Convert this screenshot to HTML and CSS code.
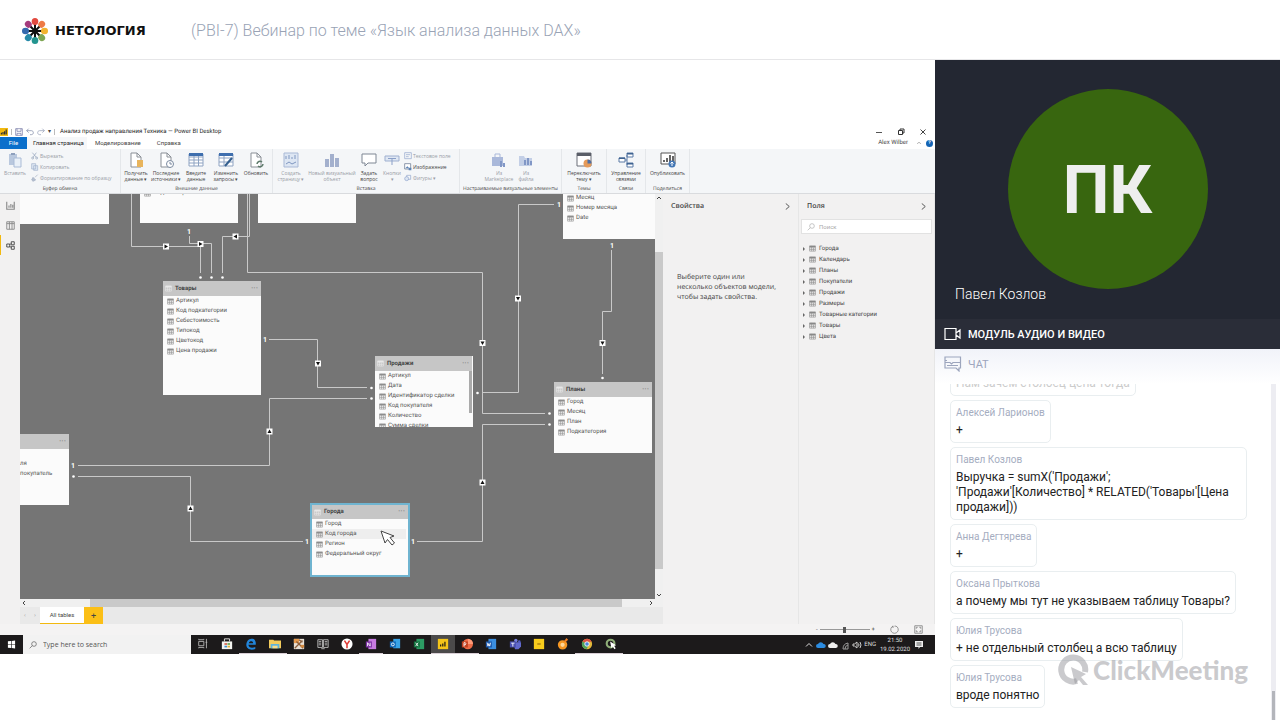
FILE: index.html
```html
<!DOCTYPE html>
<html lang="ru">
<head>
    <meta charset="UTF-8">
    <meta name="viewport" content="width=device-width, initial-scale=1.0">
    <title>Вебинар по теме «Язык анализа данных DAX»</title>
    <link rel="stylesheet" href="styles.css">
</head>
<body>
    <!-- shared icons -->
    <svg class="sprite" aria-hidden="true">
        <symbol id="i-table" viewBox="0 0 12 12"><path d="M1 1.5h10v9H1zM1 4.500h10M4.500 1.500v9M7.800 4.500v6M1 7.500h10" fill="none" stroke="currentColor"/><path d="M1 1.500h10v2H1z" fill="currentColor"/></symbol>
        <symbol id="i-doc" viewBox="0 0 16 16"><path d="M3 1h6l4 4v10H3z" fill="#fff" stroke="#8a8f96"/><path d="M9 1v4h4" fill="none" stroke="#8a8f96"/></symbol>
        <symbol id="i-search" viewBox="0 0 12 12"><circle cx="7.500" cy="4.500" r="3.500" fill="none" stroke="currentColor"/><path d="M5 7L1 11" stroke="currentColor"/></symbol>
        <symbol id="i-chevron" viewBox="0 0 8 8"><path d="M2 0.500L6 4 2 7.500" fill="none" stroke="currentColor"/></symbol>
    </svg>

    <header class="topbar">
        <a class="brand" href="#">
            <svg class="brand-mark" viewBox="0 0 28 28">
                <g stroke="#111" stroke-width="2"><path d="M14 6v16M6 14h16M8 8l12 12M20 8L8 20"/></g>
                <circle cx="14" cy="14" r="2.500" fill="#111"/>
                <ellipse cx="14" cy="4.500" rx="3.300" ry="3.500" fill="#e2493f"/>
                <ellipse cx="14" cy="4.500" rx="3.300" ry="3.500" fill="#ee7a45" transform="rotate(45 14 14)"/>
                <ellipse cx="14" cy="4.500" rx="3.300" ry="3.500" fill="#f2b32f" transform="rotate(90 14 14)"/>
                <ellipse cx="14" cy="4.500" rx="3.300" ry="3.500" fill="#7ea653" transform="rotate(135 14 14)"/>
                <ellipse cx="14" cy="4.500" rx="3.300" ry="3.500" fill="#23948f" transform="rotate(180 14 14)"/>
                <ellipse cx="14" cy="4.500" rx="3.300" ry="3.500" fill="#2689a8" transform="rotate(225 14 14)"/>
                <ellipse cx="14" cy="4.500" rx="3.300" ry="3.500" fill="#3569ad" transform="rotate(270 14 14)"/>
                <ellipse cx="14" cy="4.500" rx="3.300" ry="3.500" fill="#a43a7c" transform="rotate(315 14 14)"/>
            </svg>
            <span>НЕТОЛОГИЯ</span>
        </a>
        <h1>(PBI-7) Вебинар по теме «Язык анализа данных DAX»</h1>
    </header>

    <div class="room">
        <main class="stage">
            <div class="screen">
                <div class="titlebar">
                    <svg class="pbi" viewBox="0 0 10 10"><path d="M0 0h10v10H0z" fill="#f2b90f"/><path d="M1 8V6h1.500v2zM3 8V5h1.500v3zM5 8V4h1.500v4zM7 8V2h1.500v6z" fill="#333"/></svg>
                    <i class="tick"></i>
                    <svg class="ic8" viewBox="0 0 12 12"><path d="M1 1h10v10H1zM3 1v4h6V1M3 11V8h6v3" fill="none" stroke="#6c6fa0"/></svg>
                    <svg class="ic8" viewBox="0 0 12 12"><path d="M4 1L1 4l3 3M1 4h7c4 0 4 6 0 6H6" fill="none" stroke="#7481a0"/></svg>
                    <svg class="ic8" viewBox="0 0 12 12"><path d="M8 1l3 3-3 3M11 4H4c-4 0-4 6 0 6h2" fill="none" stroke="#8b96b0"/></svg>
                    <span class="drop">▾</span>
                    <i class="tick"></i>
                    <span class="doc-title">Анализ продаж направления Техника — Power BI Desktop</span>
                    <div class="window-buttons">
                        <button aria-label="Свернуть"><svg viewBox="0 0 8 8"><path d="M1 4.500h6" stroke="#555"/></svg></button>
                        <button aria-label="Развернуть"><svg viewBox="0 0 8 8"><path d="M1.500 2.500h4v4h-4zM3 2.500V1h4v4H5.500" fill="none" stroke="#333"/></svg></button>
                        <button aria-label="Закрыть"><svg viewBox="0 0 8 8"><path d="M1.500 1.500l5 5M6.500 1.500l-5 5" stroke="#444"/></svg></button>
                    </div>
                </div>

                <nav class="ribbon-tabs">
                    <button class="file">File</button>
                    <button class="active">Главная страница</button>
                    <button>Моделирование</button>
                    <button>Справка</button>
                    <div class="account">
                        <span>Alex Wilber</span>
                        <svg class="ic6" viewBox="0 0 8 8"><path d="M1.500 5L4 3l2.500 2" fill="none" stroke="#999"/></svg>
                        <b class="help">?</b>
                    </div>
                </nav>

                <div class="ribbon">
                    <section class="group clipboard">
                        <div class="tools">
                            <button class="tool slot-m dim">
                                <svg viewBox="0 0 16 16"><path d="M2 2h8v11H2z" fill="#b9c8de"/><path d="M4 1h4v2H4z" fill="#8ea0bd"/><path d="M7 6h7v9H7z" fill="#e9f0f8" stroke="#a9bbd6"/></svg>
                                Вставить</button>
                            <div class="stack dim">
                                <button><svg viewBox="0 0 12 12"><path d="M2 1l6 7M8 1L3 8" stroke="#8fa0b8"/><circle cx="2.500" cy="9" r="1.500" fill="none" stroke="#8fa0b8"/><circle cx="8.500" cy="9" r="1.500" fill="none" stroke="#8fa0b8"/></svg>Вырезать</button>
                                <button><svg viewBox="0 0 12 12"><path d="M1 1h6v8H1zM4 4h6v7H4z" fill="#dfe8f4" stroke="#9fb0ca"/></svg>Копировать</button>
                                <button><svg viewBox="0 0 12 12"><path d="M10 1L6 5M3 5l4 4-4 2-2-2z" fill="#b4bfd0" stroke="#9fabc0"/></svg>Форматирование по образцу</button>
                            </div>
                        </div>
                        <h4>Буфер обмена</h4>
                    </section>
                    <section class="group external">
                        <div class="tools">
                            <button class="tool slot-m"><svg viewBox="0 0 16 16"><use href="#i-doc"/><path d="M9 8h6v7H9z" fill="#e8b45c"/></svg>Получить<br>данные ▾</button>
                            <button class="tool slot-m"><svg viewBox="0 0 16 16"><use href="#i-doc"/><circle cx="12" cy="12" r="3.500" fill="#fff" stroke="#7b8aa0"/><path d="M12 10v2h2" fill="none" stroke="#7b8aa0"/></svg>Последние<br>источники ▾</button>
                            <button class="tool slot-m"><svg viewBox="0 0 16 16"><path d="M1 2h14v12H1zM1 5h14M1 8h14M1 11h14M6 2v12M10.500 2v12" fill="#fff" stroke="#8ea3c2"/><path d="M1 1h14v3H1z" fill="#3f6fae"/></svg>Введите<br>данные</button>
                            <button class="tool slot-m"><svg viewBox="0 0 16 16"><path d="M1 2h14v12H1zM1 6h14M1 10h14M6 2v12" fill="#fff" stroke="#8ea3c2"/><path d="M1 1h14v3H1z" fill="#3f6fae"/><path d="M14 6L7 14" stroke="#35608f" stroke-width="2"/></svg>Изменить<br>запросы ▾</button>
                            <button class="tool slot-m"><svg viewBox="0 0 16 16"><use href="#i-doc"/><path d="M9 12a3 3 0 0 1 5-2M15 12a3 3 0 0 1-5 2" fill="none" stroke="#5d7a6a" stroke-width="1.500"/></svg>Обновить</button>
                        </div>
                        <h4>Внешние данные</h4>
                    </section>
                    <section class="group insert">
                        <div class="tools">
                            <button class="tool slot-m dim"><svg viewBox="0 0 16 16"><path d="M1 1h14v14H1z" fill="#dde6f3" stroke="#a9b9d6"/><path d="M3 7V4M6 7V3M9 7V5M12 7V3M3 12l3-2 3 2 4-2" fill="none" stroke="#7f97c0"/></svg>Создать<br>страницу ▾</button>
                            <button class="tool slot-l dim"><svg viewBox="0 0 16 16"><path d="M1 7h4v8H1zM6 2h4v13H6zM11 6h4v9h-4z" fill="#a3b0cd"/></svg>Новый визуальный<br>объект</button>
                            <button class="tool slot-s"><svg viewBox="0 0 16 16"><path d="M1 2h14v9H7l-3 3v-3H1z" fill="#fff" stroke="#7e8794"/></svg>Задать<br>вопрос</button>
                            <button class="tool slot-s dim"><svg viewBox="0 0 16 16"><path d="M1 4h14v5H1z" fill="#dfe7f3" stroke="#9fb0d0"/><path d="M4 6.500h8M8 7v6" stroke="#8ba0c8"/></svg>Кнопки<br>▾</button>
                            <div class="stack">
                                <button class="dim"><svg viewBox="0 0 12 12"><path d="M1 1h10v9H1zM3 4h6M3 7h4" fill="none" stroke="#8fa4cc"/></svg>Текстовое поле</button>
                                <button><svg viewBox="0 0 12 12"><path d="M1 1h9v8H1z" fill="#fff" stroke="#5a6b85"/><path d="M2 8l3-3 3 3zM7 7h4v4H7z" fill="#5d83b5"/></svg>Изображение</button>
                                <button class="dim"><svg viewBox="0 0 12 12"><path d="M4 2h6v6H4z" fill="none" stroke="#8fa4cc"/><circle cx="4" cy="7" r="3" fill="#dde6f3" stroke="#8fa4cc"/></svg>Фигуры ▾</button>
                            </div>
                        </div>
                        <h4>Вставка</h4>
                    </section>
                    <section class="group visuals">
                        <div class="tools">
                            <button class="tool slot-m dim"><svg viewBox="0 0 16 16"><path d="M1 5h11v9H1z" fill="#a9b8da"/><path d="M4 5V2h5v3" fill="none" stroke="#a9b8da"/><path d="M9 15V9h2v6zM12 15v-4h2v4z" fill="#8197c6"/></svg>Из<br>Marketplace</button>
                            <button class="tool slot-s dim"><svg viewBox="0 0 16 16"><path d="M1 4h5l1 2h7v8H1z" fill="#c3cfe6"/><path d="M6 13V8h2v5zM9 13V6h2v7zM12 13V9h2v4z" fill="#8197c6"/></svg>Из<br>файла</button>
                        </div>
                        <h4>Настраиваемые визуальные элементы</h4>
                    </section>
                    <section class="group themes">
                        <div class="tools">
                            <button class="tool slot-m"><svg viewBox="0 0 16 16"><path d="M1 1h14v13H1z" fill="#fff" stroke="#6a6e78"/><path d="M1 1h14v3H1z" fill="#5a5e68"/><circle cx="11.500" cy="11.500" r="4" fill="#e59a59"/><path d="M11.500 11.500v-4a4 4 0 0 1 4 4z" fill="#4d6fa5"/></svg>Переключить<br>тему ▾</button>
                        </div>
                        <h4>Темы</h4>
                    </section>
                    <section class="group relations">
                        <div class="tools">
                            <button class="tool slot-m"><svg viewBox="0 0 16 16"><path d="M1 6h6v4H1zM9 1h6v4H9zM9 11h6v4H9zM7 8h2V3M9 8v5" fill="#fff" stroke="#5a7aa6"/><path d="M1 5.500h6v1.500H1zM9 1h6v1.500H9zM9 11h6v1.500H9z" fill="#3e6391"/></svg>Управление<br>связями</button>
                        </div>
                        <h4>Связи</h4>
                    </section>
                    <section class="group share">
                        <div class="tools">
                            <button class="tool slot-m"><svg viewBox="0 0 16 16"><path d="M1 1h14v11H1z" fill="#fff" stroke="#555"/><path d="M4 10V8M7 10V6M10 10V3M13 9V4" stroke="#333" stroke-width="1.500"/><circle cx="12" cy="12" r="3.500" fill="#4377b5"/><path d="M12 14v-4M10.500 11.500L12 10l1.500 1.500" fill="none" stroke="#fff"/></svg>Опубликовать</button>
                        </div>
                        <h4>Поделиться</h4>
                    </section>
                </div>

                <div class="workspace">
                    <aside class="rail">
                        <button aria-label="Отчет"><svg viewBox="0 0 12 12"><path d="M1 1v10h10V1M4 9V6M6.500 9V4M9 9V5" fill="none" stroke="#888" stroke-width="1.500"/></svg></button>
                        <button aria-label="Данные"><svg viewBox="0 0 12 12"><path d="M1 1h10v10H1zM1 3.500h10M4.500 1v10M8 1v10" fill="none" stroke="#888" stroke-width="1.200"/></svg></button>
                        <button class="active" aria-label="Модель"><svg viewBox="0 0 12 12"><path d="M1 4h4v4H1zM7 1h4v4H7zM7 7h4v4H7zM5 5l2-2M5 7l2 2" fill="none" stroke="#444" stroke-width="1.200"/></svg></button>
                    </aside>

                    <div class="model">
                        <div class="canvas-row">
                            <div class="canvas">
                                <!-- relationship lines -->
                                <svg class="links" viewBox="20 194 635 405">
                                    <g fill="none" stroke="#c9c9c9" stroke-width="1">
                                        <path d="M131.500 194V246.500H200.500V273"/>
                                        <path d="M189.500 236V243.500H211.500V273"/>
                                        <path d="M249.500 194V236.500H222.500V273"/>
                                        <path d="M247.500 194V272.500H482.500V413.500H545"/>
                                        <path d="M269 339.500H317.500V387.500H367"/>
                                        <path d="M78 465.500H269.500V398.500H367"/>
                                        <path d="M78 476.500H190.500V541.500H303"/>
                                        <path d="M417 541.500H482.500V424.500H545"/>
                                        <path d="M554 204.500H518.500V392.500H482"/>
                                        <path d="M611.500 250V311.500H602.500V374"/>
                                    </g>
                                    <g fill="#fff">
                                        <circle cx="200.500" cy="277.500" r="1.300"/><circle cx="211.500" cy="277.500" r="1.300"/><circle cx="222.500" cy="277.500" r="1.300"/>
                                        <circle cx="371.500" cy="388" r="1.300"/><circle cx="371.500" cy="398.500" r="1.300"/><circle cx="477.500" cy="393" r="1.300"/>
                                        <circle cx="549.500" cy="413.500" r="1.300"/><circle cx="549.500" cy="424.500" r="1.300"/><circle cx="602.500" cy="378" r="1.300"/><circle cx="73.500" cy="476.500" r="1.300"/>
                                    </g>
                                    <g class="ones">
                                        <text x="189" y="234">1</text><text x="265" y="342">1</text><text x="73" y="468">1</text><text x="307" y="544">1</text>
                                        <text x="413" y="544">1</text><text x="559" y="207">1</text><text x="612" y="248">1</text>
                                    </g>
                                    <defs><g id="arrow"><path d="M-3-3h6v6h-6z" fill="#fff"/><path d="M-2-1.500h4L0 2z" fill="#111"/></g></defs>
                                    <use href="#arrow" transform="translate(166 246.500) rotate(-90)"/>
                                    <use href="#arrow" transform="translate(200.500 244) rotate(-90)"/>
                                    <use href="#arrow" transform="translate(235.500 236.500) rotate(90)"/>
                                    <use href="#arrow" transform="translate(482.500 343)"/>
                                    <use href="#arrow" transform="translate(318 363.500)"/>
                                    <use href="#arrow" transform="translate(518 298.500)"/>
                                    <use href="#arrow" transform="translate(602.500 343)"/>
                                    <use href="#arrow" transform="translate(269.500 431.500) rotate(180)"/>
                                    <use href="#arrow" transform="translate(190.500 508.500) rotate(180)"/>
                                    <use href="#arrow" transform="translate(482.500 482.500) rotate(180)"/>
                                </svg>

                                <div class="node node-blank"></div>
                                <div class="node node-subcategory">
                                    <ul><li><svg><use href="#i-table"/></svg>Подкатегория</li></ul>
                                </div>
                                <div class="node node-category"></div>
                                <div class="node node-calendar">
                                    <ul>
                                        <li><svg><use href="#i-table"/></svg>Месяц</li>
                                        <li><svg><use href="#i-table"/></svg>Номер месяца</li>
                                        <li><svg><use href="#i-table"/></svg>Date</li>
                                    </ul>
                                </div>
                                <div class="node node-goods">
                                    <h3><svg><use href="#i-table"/></svg>Товары<span>···</span></h3>
                                    <ul>
                                        <li><svg><use href="#i-table"/></svg>Артикул</li>
                                        <li><svg><use href="#i-table"/></svg>Код подкатегории</li>
                                        <li><svg><use href="#i-table"/></svg>Себестоимость</li>
                                        <li><svg><use href="#i-table"/></svg>Типокод</li>
                                        <li><svg><use href="#i-table"/></svg>Цветокод</li>
                                        <li><svg><use href="#i-table"/></svg>Цена продажи</li>
                                    </ul>
                                </div>
                                <div class="node node-sales">
                                    <h3><svg><use href="#i-table"/></svg>Продажи<span>···</span></h3>
                                    <ul>
                                        <li><svg><use href="#i-table"/></svg>Артикул</li>
                                        <li><svg><use href="#i-table"/></svg>Дата</li>
                                        <li><svg><use href="#i-table"/></svg>Идентификатор сделки</li>
                                        <li><svg><use href="#i-table"/></svg>Код покупателя</li>
                                        <li><svg><use href="#i-table"/></svg>Количество</li>
                                        <li><svg><use href="#i-table"/></svg>Сумма сделки</li>
                                    </ul>
                                </div>
                                <div class="node node-plans">
                                    <h3><svg><use href="#i-table"/></svg>Планы<span>···</span></h3>
                                    <ul>
                                        <li><svg><use href="#i-table"/></svg>Город</li>
                                        <li><svg><use href="#i-table"/></svg>Месяц</li>
                                        <li><svg><use href="#i-table"/></svg>План</li>
                                        <li><svg><use href="#i-table"/></svg>Подкатегория</li>
                                    </ul>
                                </div>
                                <div class="node node-buyers">
                                    <h3><span>···</span></h3>
                                    <ul>
                                        <li>ля</li>
                                        <li>покупатель</li>
                                    </ul>
                                </div>
                                <div class="node node-cities">
                                    <h3><svg><use href="#i-table"/></svg>Города<span>···</span></h3>
                                    <ul>
                                        <li><svg><use href="#i-table"/></svg>Город</li>
                                        <li class="hover"><svg><use href="#i-table"/></svg>Код города</li>
                                        <li><svg><use href="#i-table"/></svg>Регион</li>
                                        <li><svg><use href="#i-table"/></svg>Федеральный округ</li>
                                    </ul>
                                </div>
                                <svg class="pointer" viewBox="0 0 16 16"><path d="M1 1l4 12 2.500-3.500L12 15l2.500-2-4.500-5.500L14 6z" fill="#fff" stroke="#444"/></svg>
                            </div>
                            <div class="vscroll">
                                <svg viewBox="0 0 8 8"><path d="M2 5l2-2 2 2" fill="none" stroke="#444"/></svg>
                                <i></i>
                                <svg viewBox="0 0 8 8"><path d="M2 3l2 2 2-2" fill="none" stroke="#444"/></svg>
                            </div>
                        </div>
                        <div class="hscroll">
                            <svg viewBox="0 0 8 8"><path d="M5 2L3 4l2 2" fill="none" stroke="#444"/></svg>
                            <i></i>
                            <svg viewBox="0 0 8 8"><path d="M3 2l2 2-2 2" fill="none" stroke="#444"/></svg>
                        </div>
                        <div class="sheets">
                            <span>‹</span><span>›</span>
                            <button class="sheet">All tables</button>
                            <button class="add" aria-label="Добавить">+</button>
                        </div>
                    </div>

                    <aside class="panel props">
                        <h2>Свойства <svg><use href="#i-chevron"/></svg></h2>
                        <p>Выберите один или несколько объектов модели, чтобы задать свойства.</p>
                    </aside>

                    <aside class="panel fields">
                        <h2>Поля <svg><use href="#i-chevron"/></svg></h2>
                        <label class="find"><svg><use href="#i-search"/></svg><input type="text" placeholder="Поиск" aria-label="Поиск"></label>
                        <ul>
                            <li><svg><use href="#i-table"/></svg>Города</li>
                            <li><svg><use href="#i-table"/></svg>Календарь</li>
                            <li><svg><use href="#i-table"/></svg>Планы</li>
                            <li><svg><use href="#i-table"/></svg>Покупатели</li>
                            <li><svg><use href="#i-table"/></svg>Продажи</li>
                            <li><svg><use href="#i-table"/></svg>Размеры</li>
                            <li><svg><use href="#i-table"/></svg>Товарные категории</li>
                            <li><svg><use href="#i-table"/></svg>Товары</li>
                            <li><svg><use href="#i-table"/></svg>Цвета</li>
                        </ul>
                    </aside>
                </div>

                <div class="statusbar">
                    <span>-</span>
                    <input type="range" min="0" max="100" value="50" aria-label="Масштаб">
                    <span>+</span>
                    <svg viewBox="0 0 12 12"><path d="M4 1.500a5 5 0 1 0 4 0M4 1v3M8 1.500h-2" fill="none" stroke="#777"/></svg>
                    <svg viewBox="0 0 12 12"><path d="M1 1h10v10H1z" fill="none" stroke="#777"/><path d="M3 5V3h2M7 3h2v2M9 7v2H7M5 9H3V7" fill="none" stroke="#777"/></svg>
                </div>

                <div class="taskbar">
                    <button class="start" aria-label="Пуск"><svg viewBox="0 0 10 10"><path d="M1 1.500L4.500 1v3.700H1zM5.200 1L9 .5v4.200H5.200zM1 5.300h3.500V9L1 8.500zM5.200 5.300H9v4.200L5.200 9z" fill="#fff"/></svg></button>
                    <label class="win-search"><svg><use href="#i-search"/></svg><input type="text" placeholder="Type here to search" aria-label="Type here to search"></label>
                    <div class="apps">
                        <button><svg viewBox="0 0 14 14"><path d="M2 4h6v5H2zM2 1v1h6V1M2 12v-1h6v1M11 1v11M10 5h2" fill="none" stroke="#bbb"/></svg></button>
                        <button><svg viewBox="0 0 14 14"><path d="M1 4h12v9H1z" fill="#f4f4f0"/><path d="M4 4V1h6v3" fill="none" stroke="#f4f4f0"/><path d="M4 6h3v2H4z" fill="#d9614f"/><path d="M7.500 6h3v2h-3z" fill="#6aa84f"/><path d="M4 9h3v2H4z" fill="#3f8fd0"/><path d="M7.500 9h3v2h-3z" fill="#e5b53b"/></svg></button>
                        <button class="open"><svg viewBox="0 0 14 14"><path d="M12.500 8H4c.3 4 5 4 8 2.500v2.200C7 15 1.500 13 1.500 8 2 2 6 1 8 1c4 0 5 3.500 4.500 7zM4.500 6h5c0-3-4.500-3-5 0z" fill="#2286dc" fill-rule="evenodd"/></svg></button>
                        <button class="open"><svg viewBox="0 0 14 14"><path d="M0 2h5l1 1h8v9H0z" fill="#f3cb5c"/><path d="M2 7h10v5H2z" fill="#5eb3dc"/><path d="M4 9h6v3H4z" fill="#f7dd8c"/></svg></button>
                        <button><svg viewBox="0 0 14 14"><path d="M1 1h12v12H1z" fill="#e8e0d5"/><path d="M1 1h6v5H1z" fill="#e79a4d"/><path d="M2 12l9-9M4 4l8 8M7 2l4 3" stroke="#8b5e3c" stroke-width="1.500"/><path d="M9 8h4v3H9z" fill="#d3883d"/></svg></button>
                        <button><svg viewBox="0 0 14 14"><path d="M1 2h5.500v9H1zM7.500 2H13v9H7.500zM2 4h3M2 6h3M2 8h3M9 4h3M9 6h3M9 8h3M5 12.500h4" fill="none" stroke="#c4c4c4"/></svg></button>
                        <button><svg viewBox="0 0 14 14"><circle cx="7" cy="7" r="6.500" fill="#fff"/><path d="M4 3l3 4.500L10 3M7 7v5" fill="none" stroke="#df3b35" stroke-width="1.800"/></svg></button>
                        <button class="open"><svg viewBox="0 0 14 14"><path d="M4 1h9v12H4z" fill="#c77be0"/><path d="M1 4h7v7H1z" fill="#7b2fa3"/><path d="M3 9.500v-4l3 4v-4" fill="none" stroke="#fff"/></svg></button>
                        <button><svg viewBox="0 0 14 14"><path d="M5 1h8v11H5z" fill="#38a3e8"/><path d="M1 4h7v7H1z" fill="#0f66b8"/><circle cx="4.500" cy="7.500" r="1.700" fill="none" stroke="#fff"/></svg></button>
                        <button><svg viewBox="0 0 14 14"><path d="M4 1h9v12H4z" fill="#2c9b63"/><path d="M1 4h7v7H1z" fill="#11703e"/><path d="M3 5.500l3 4M6 5.500l-3 4" stroke="#fff"/></svg></button>
                        <button class="open current"><svg viewBox="0 0 14 14"><path d="M1 1h12v12H1z" fill="#f5c518"/><path d="M3.500 10V7.500H5V10zM6 10V6.500h1.500V10zM8.500 10V4.500H10V10z" fill="#2a2410"/></svg></button>
                        <button class="open"><svg viewBox="0 0 14 14"><circle cx="8" cy="7" r="6" fill="#ed6c47"/><path d="M8 1a6 6 0 0 1 6 6H8z" fill="#ff9a78"/><path d="M1 4h7v7H1z" fill="#c2401f"/><path d="M3.500 10V5.500h1.500q1.500 1.200 0 2.500H3.500" fill="none" stroke="#fff"/></svg></button>
                        <button><svg viewBox="0 0 14 14"><path d="M4 1h9v12H4z" fill="#3c8fe0"/><path d="M1 4h7v7H1z" fill="#1a56ab"/><path d="M2.500 5.500l1 4 1-3 1 3 1-4" fill="none" stroke="#fff"/></svg></button>
                        <button><svg viewBox="0 0 14 14"><circle cx="8" cy="3" r="2" fill="#7780dd"/><circle cx="12" cy="4" r="1.500" fill="#5059c9"/><path d="M5 5h9v5l-3 3H7z" fill="#6169cc"/><path d="M1 4h7v7H1z" fill="#4a50b0"/><path d="M2.500 6h4M4.500 6v4" stroke="#fff"/></svg></button>
                        <button><svg viewBox="0 0 14 14"><path d="M1 1h12v12H1z" fill="#f8cc1c"/><path d="M5 6h4v2H5z" fill="#b68a12"/></svg></button>
                        <button><svg viewBox="0 0 14 14"><circle cx="6.500" cy="8" r="4" fill="#ffd79a" stroke="#f79722" stroke-width="3"/><path d="M8 4l3-4 2 2-3 3z" fill="#ef7d22"/></svg></button>
                        <button class="open"><svg viewBox="0 0 14 14"><circle cx="7" cy="7" r="6" fill="#e3b83a"/><path d="M7 7L1.800 4A6 6 0 0 1 12.500 4.500H7z" fill="#dd5144"/><path d="M7 7L1.800 4A6 6 0 0 0 6.500 13L9 8z" fill="#4fa35c"/><circle cx="7" cy="7" r="2.600" fill="#4a86d8" stroke="#fff"/></svg></button>
                        <button class="open"><svg viewBox="0 0 14 14"><circle cx="6.500" cy="6.500" r="4.500" fill="none" stroke="#8fae78" stroke-width="2.500"/><path d="M6 4l1.500 8 1.500-2 2 3 1.500-1-2-3 2.500-.5z" fill="#fff"/></svg></button>
                    </div>
                    <div class="tray">
                        <svg viewBox="0 0 10 10"><path d="M2 6.500L5 3.500l3 3" fill="none" stroke="#ddd"/></svg>
                        <svg viewBox="0 0 10 10"><path d="M2 8a2 2 0 0 1 0-4 3 3 0 0 1 5.500 0A2 2 0 0 1 8 8z" fill="#2b8be0"/></svg>
                        <svg viewBox="0 0 10 10"><path d="M2 8a2 2 0 0 1 0-4 3 3 0 0 1 5.500 0A2 2 0 0 1 8 8z" fill="#eee"/></svg>
                        <svg viewBox="0 0 10 10"><path d="M3 9a6 6 0 0 1 5-6v6zM5 9a4 4 0 0 1 3-4" fill="none" stroke="#999"/></svg>
                        <svg viewBox="0 0 10 10"><path d="M1 4h1.500L5 2v6L2.500 6H1zM6.500 3.500q1 1.500 0 3M8 2q2 3 0 6" fill="none" stroke="#ccc"/></svg>
                        <span>ENG</span>
                        <time>21:50<br>19.02.2020</time>
                        <svg viewBox="0 0 10 10"><path d="M1 1h8v6H6L4.500 9V7H1z" fill="#eee"/><path d="M2.500 3h5M2.500 5h5" stroke="#555"/></svg>
                    </div>
                </div>
            </div>
        </main>

        <aside class="sidebar">
            <div class="video">
                <div class="avatar">ПК</div>
                <span class="speaker">Павел Козлов</span>
            </div>
            <h2 class="module">
                <svg viewBox="0 0 18 14"><path d="M1 1.500h11v11H1zM12 6l4-3v8l-4-3" fill="none" stroke="currentColor" stroke-width="1.200"/></svg>
                Модуль аудио и видео
            </h2>
            <h2 class="module module-chat">
                <svg viewBox="0 0 18 16"><path d="M1 1h15.500v11H15v3l-3-3H1zM1 6.500h5l1.500 1.500L9 6.500h7.500M3 9.500h11M1 4.500h2" fill="none" stroke="currentColor" stroke-width="1.200"/></svg>
                Чат
            </h2>
            <div class="chat">
                <div class="messages">
                    <div class="message faded"><p>Нам зачем столбец цена тогда</p></div>
                    <div class="message"><b>Алексей Ларионов</b><p>+</p></div>
                    <div class="message"><b>Павел Козлов</b><p>Выручка = sumX('Продажи'; 'Продажи'[Количество] * RELATED('Товары'[Цена продажи]))</p></div>
                    <div class="message"><b>Анна Дегтярева</b><p>+</p></div>
                    <div class="message"><b>Оксана Прыткова</b><p>а почему мы тут не указываем таблицу Товары?</p></div>
                    <div class="message"><b>Юлия Трусова</b><p>+ не отдельный столбец а всю таблицу</p></div>
                    <div class="message"><b>Юлия Трусова</b><p>вроде понятно</p></div>
                </div>
                <div class="scrollbar"><i></i></div>
                <div class="watermark">
                    <svg viewBox="0 0 32 32"><path d="M20 27a12 12 0 1 1 8-9" fill="none" stroke="currentColor" stroke-width="6"/><path d="M14 13l15 7-5 3 7 8h-5l-4-5-4 4z" fill="currentColor"/></svg>
                    <span>ClickMeeting</span>
                </div>
            </div>
        </aside>
    </div>
</body>
</html>
```
FILE: styles.css
```css
* {
    box-sizing: border-box;
}
body {
    margin: 0;
    height: 100vh;
    display: flex;
    flex-direction: column;
    overflow: hidden;
    font-family: Roboto, sans-serif;
    background: #fff;
    color: #222;
}
h1, h2, h3, h4, p, ul {
    margin: 0;
    padding: 0;
    font-weight: normal;
}
ul {
    list-style: none;
}
button, input {
    font: inherit;
    color: inherit;
    border: none;
    padding: 0;
    background: none;
}
svg {
    display: block;
    flex: none;
}
.sprite {
    position: absolute;
    width: 0;
    height: 0;
}

/* header */
.topbar {
    flex: none;
    height: 60px;
    display: flex;
    align-items: center;
    padding: 2px 0 0 21px;
    border-bottom: 1px solid #e6e6e8;
}
.brand {
    display: flex;
    align-items: center;
    gap: 6px;
    width: 170px;
    color: #111;
    text-decoration: none;
    font: bold 13px "DejaVu Sans", sans-serif;
}
.brand-mark {
    width: 28px;
    height: 28px;
}
.topbar h1 {
    font-size: 16px;
    font-weight: 300;
    color: #99a3b5;
}

.room {
    flex: 1;
    min-height: 0;
    display: grid;
    grid-template-columns: 1fr 345px;
}
.stage {
    display: flex;
    align-items: center;
    padding-top: 1px;
    min-width: 0;
}

/* shared screen */
.screen {
    width: 100%;
    aspect-ratio: 935 / 527;
    display: flex;
    flex-direction: column;
    font-size: 6px;
    line-height: 6px;
    color: #444;
    text-rendering: geometricPrecision;
    background: #fff;
    overflow: hidden;
}
.screen button, .screen span {
    white-space: nowrap;
}
.titlebar {
    flex: none;
    height: 10px;
    display: flex;
    align-items: center;
    gap: 3px;
}
.pbi {
    width: 8px;
    height: 8px;
}
.tick {
    width: 1px;
    height: 6px;
    background: #bbb;
}
.ic8 {
    width: 8px;
    height: 8px;
}
.ic6 {
    width: 6px;
    height: 6px;
}
.doc-title {
    padding-left: 2px;
    color: #222;
}
.window-buttons {
    margin-left: auto;
    padding-right: 8px;
    display: flex;
    gap: 14px;
}
.window-buttons svg {
    width: 8px;
    height: 8px;
}
.ribbon-tabs {
    flex: none;
    height: 12px;
    display: flex;
}
.ribbon-tabs button {
    padding: 0 8px;
}
.ribbon-tabs .file {
    width: 27px;
    background: #0a6fcb;
    color: #fff;
}
.ribbon-tabs .active {
    width: 60px;
    padding: 0 6px;
    background: #f6f7f9;
    color: #222;
}
.account {
    margin-left: auto;
    display: flex;
    align-items: center;
    gap: 4px;
}
.account span {
    margin-right: 4px;
}
.help {
    width: 7px;
    height: 7px;
    border-radius: 50%;
    background: #1464b4;
    color: #fff;
    font-size: 5px;
    line-height: 7px;
    text-align: center;
    margin-right: 2px;
}

.ribbon {
    flex: none;
    height: 45px;
    display: flex;
    font-family: "Open Sans", sans-serif;
    font-size: 5px;
    background: #f4f6f8;
    border-bottom: 1px solid #d9dbde;
}
.group {
    display: flex;
    flex-direction: column;
    justify-content: space-between;
    padding: 3px 0 1px;
    border-right: 1px solid #e4e7ea;
}
.group h4 {
    text-align: center;
    white-space: nowrap;
    font-size: 5px;
}
.clipboard { width: 121px; }
.external { width: 152px; }
.insert { width: 187px; }
.visuals { width: 102px; }
.themes { width: 45px; }
.relations { width: 39px; }
.share { width: 44px; }
.tools {
    display: flex;
    align-items: flex-start;
    gap: 1px;
}
.insert .tools { padding-left: 3px; }
.external .tools { gap: 0; }
.visuals .tools { padding-left: 24px; }
.themes .tools, .relations .tools, .share .tools {
    justify-content: center;
}
.tool {
    text-align: center;
}
.tool svg {
    width: 16px;
    height: 16px;
    margin: 0 auto 2px;
}
.slot-s { width: 22px; }
.slot-m { width: 30px; }
.slot-l { width: 50px; }
.themes .slot-m { width: 44px; }
.relations .slot-m { width: 38px; }
.share .slot-m { width: 43px; }
.dim {
    color: #999da6;
}
.stack {
    display: flex;
    flex-direction: column;
    gap: 3px;
}
.stack button {
    display: flex;
    align-items: center;
    gap: 1px;
}
.stack svg {
    width: 8px;
    height: 8px;
}

.workspace {
    flex: 1;
    min-height: 0;
    display: flex;
    background: #f2f1f1;
}
.rail {
    width: 20px;
    padding-top: 1px;
}
.rail button {
    display: flex;
    align-items: center;
    justify-content: center;
    width: 20px;
    height: 20px;
    border-left: 1px solid transparent;
}
.rail svg {
    width: 9px;
    height: 9px;
}
.rail .active {
    border-left-color: #f2b90f;
}
.model {
    flex: 1;
    min-width: 0;
    display: flex;
    flex-direction: column;
}
.canvas-row {
    flex: 1;
    min-height: 0;
    display: flex;
}
.canvas {
    position: relative;
    flex: 1;
    overflow: hidden;
    background: #757575;
}
.links {
    position: absolute;
    left: 0;
    top: 0;
    width: 635px;
    height: 405px;
}
.ones {
    fill: #fff;
    font-size: 7px;
    font-weight: bold;
    text-anchor: middle;
}
.node {
    position: absolute;
    width: 98px;
    overflow: hidden;
    background: #fbfbfb;
    color: #555;
}
.node h3 {
    display: flex;
    align-items: center;
    gap: 3px;
    height: 15px;
    padding: 0 3px 0 2px;
    background: #c6c6c6;
    font-size: 6px;
    font-weight: 700;
    color: #444;
}
.node h3 span {
    margin-left: auto;
    color: #777;
    font-size: 9px;
    font-weight: 400;
}
.node h3 svg {
    width: 7px;
    height: 7px;
    color: #e8e8e8;
}
.node li {
    display: flex;
    align-items: center;
    gap: 2px;
    height: 10px;
    padding-left: 4px;
    white-space: nowrap;
}
.node li svg {
    width: 7px;
    height: 7px;
    color: #8d8d8d;
}
.node .hover {
    background: linear-gradient(#eee, #eee) no-repeat 0 0 / 94px 100%;
}
.node-blank { left: 0; top: 0; width: 89px; height: 30px; }
.node-subcategory { left: 120px; top: 0; height: 29px; }
.node-subcategory ul { margin-top: -6px; }
.node-category { left: 238px; top: 0; height: 29px; }
.node-calendar { left: 543px; top: 0; width: 92px; height: 45px; }
.node-calendar ul { margin-top: -1px; }
.node-goods { left: 143px; top: 87px; height: 114px; }
.node-sales { left: 355px; top: 162px; height: 71px; border-right: 1px solid #fbfbfb; }
.node-sales ul { border-right: 3px solid #aaa; height: 42px; }
.node-plans { left: 534px; top: 188px; height: 71px; }
.node-buyers { left: 0; top: 240px; width: 49px; height: 71px; }
.node-buyers ul { padding-top: 10px; }
.node-buyers li { padding-left: 0; }
.node-cities { left: 290px; top: 309px; width: 100px; height: 74px; border: 2px solid #6fb4d0; }
.node-cities h3 { height: 14px; }
.pointer {
    position: absolute;
    left: 360px;
    top: 336px;
    width: 16px;
    height: 16px;
}
.vscroll {
    width: 8px;
    display: flex;
    flex-direction: column;
    background: #f0f0f0;
}
.vscroll i {
    margin-top: 50px;
    flex: 1;
    margin-bottom: 22px;
    background: #c9c9c9;
}
.vscroll svg, .hscroll svg {
    width: 8px;
    height: 8px;
}
.hscroll {
    flex: none;
    display: flex;
    padding-right: 8px;
    background: #f0f0f0;
}
.hscroll i {
    flex: 1;
    margin: 0 25px 0 62px;
    background: #c9c9c9;
}
.sheets {
    flex: none;
    height: 17px;
    display: flex;
    align-items: center;
    background: #e9e9e9;
}
.sheets span {
    width: 10px;
    text-align: center;
    color: #aaa;
}
.sheet {
    width: 44px;
    height: 17px;
    background: #fff;
    border-bottom: 1px solid #f2b90f;
}
.add {
    width: 19px;
    height: 17px;
    background: #fbbf17;
    font-size: 9px;
}

.panel {
    width: 136px;
    border-right: 1px solid #e6e6e6;
}
.panel h2 {
    display: flex;
    align-items: center;
    justify-content: space-between;
    height: 25px;
    padding: 0 7px 0 8px;
    font-family: "Open Sans", sans-serif;
    font-size: 7px;
    font-weight: 600;
    color: #444;
}
.panel h2 svg {
    width: 7px;
    height: 7px;
}
.props p {
    padding: 54px 20px 0 14px;
    font-family: "Open Sans", sans-serif;
    font-size: 7px;
    line-height: 10px;
}
.find {
    display: flex;
    align-items: center;
    gap: 4px;
    height: 15px;
    margin: 0 2px;
    padding-left: 5px;
    background: #fff;
    border: 1px solid #e2e2e2;
    color: #aaa;
}
.find svg {
    width: 8px;
    height: 8px;
}
.find input {
    width: 100px;
}
input::placeholder {
    color: inherit;
}
.fields ul {
    padding: 9px 0 0 4px;
}
.fields li {
    display: flex;
    align-items: center;
    gap: 3px;
    height: 11px;
}
.fields li::before {
    content: "";
    border: 2px solid transparent;
    border-left: 2px solid #666;
    border-right: none;
    margin-right: 1px;
}
.fields li svg {
    width: 7px;
    height: 7px;
    color: #888;
}

.statusbar {
    flex: none;
    height: 11px;
    display: flex;
    align-items: center;
    justify-content: flex-end;
    gap: 2px;
    padding-right: 12px;
    background: #f4f3f3;
}
.statusbar svg {
    width: 9px;
    height: 9px;
    margin-left: 13px;
}
.statusbar input {
    appearance: none;
    width: 50px;
    height: 1px;
    margin: 0;
    background: #999;
}
.statusbar input::-webkit-slider-thumb {
    appearance: none;
    width: 3px;
    height: 6px;
    background: #555;
}

.taskbar {
    flex: none;
    height: 19px;
    display: flex;
    background: #1c1a1b;
    color: #ddd;
}
.start {
    width: 23px;
}
.start svg {
    width: 9px;
    height: 9px;
    margin: 0 auto;
}
.win-search {
    width: 168px;
    display: flex;
    align-items: center;
    gap: 6px;
    padding-left: 6px;
    background: #f2f2f2;
    color: #555;
    font-family: "Open Sans", sans-serif;
    font-size: 7px;
}
.win-search svg {
    width: 8px;
    height: 8px;
}
.apps {
    display: flex;
}
.apps button {
    display: flex;
    align-items: center;
    justify-content: center;
    width: 24px;
    border-bottom: 1px solid transparent;
}
.apps svg {
    width: 12px;
    height: 12px;
}
.apps .open {
    border-bottom-color: #d9cfd6;
}
.apps .current {
    background: #4b4a4a;
}
.tray {
    margin-left: auto;
    display: flex;
    align-items: center;
    gap: 2px;
    padding-right: 11px;
}
.tray svg {
    width: 10px;
    height: 10px;
}
.tray time {
    width: 34px;
    text-align: center;
    line-height: 9px;
}

/* right column */
.sidebar {
    display: flex;
    flex-direction: column;
    min-height: 0;
}
.video {
    position: relative;
    flex: none;
    height: 259px;
    display: flex;
    align-items: center;
    justify-content: center;
    padding-bottom: 1px;
    background: #232732;
}
.avatar {
    width: 200px;
    height: 200px;
    border-radius: 50%;
    background: #38660f;
    color: #eee;
    font-size: 66px;
    font-weight: 700;
    line-height: 204px;
    text-align: center;
}
.speaker {
    position: absolute;
    left: 20px;
    bottom: 16px;
    font-size: 14px;
    line-height: 18px;
    font-weight: 300;
    color: #fff;
}
.module {
    flex: none;
    display: flex;
    align-items: center;
    gap: 6px;
    height: 30px;
    padding-left: 9px;
    background: #2a2d38;
    color: #fff;
    font-size: 11px;
    font-weight: 500;
    text-transform: uppercase;
}
.module svg {
    width: 18px;
    height: 14px;
}
.module-chat {
    height: 35px;
    padding-bottom: 5px;
    background: linear-gradient(#f1f3f9, #fff);
    color: #9ca5bd;
    font-weight: 400;
}
.module-chat svg {
    height: 16px;
}
.chat {
    position: relative;
    flex: 1;
    min-height: 0;
    display: flex;
}
.messages {
    flex: 1;
    display: flex;
    flex-direction: column;
    align-items: flex-start;
    justify-content: flex-end;
    gap: 4px;
    padding: 0 24px 12px 15px;
    overflow: hidden;
}
.message {
    flex: none;
    max-width: 297px;
    padding: 5px 5px 4px;
    border: 1px solid #e9eef0;
    border-radius: 5px;
}
.message b {
    display: block;
    margin-bottom: 3px;
    font-size: 10px;
    line-height: 14px;
    font-weight: 400;
    color: #a5adbf;
}
.message p {
    font-size: 12px;
    line-height: 15px;
}
.faded p {
    color: #ccc;
}
.scrollbar {
    width: 5px;
    margin-right: 4px;
    display: flex;
    align-items: flex-end;
    background: #ededf2;
}
.scrollbar i {
    width: 3px;
    height: 29px;
    margin-left: 1px;
    background: #b3b5bb;
}
.watermark {
    position: absolute;
    right: 32px;
    bottom: 34px;
    display: flex;
    align-items: center;
    gap: 4px;
    color: rgba(150, 150, 155, 0.5);
    font: 900 26px Lato, sans-serif;
}
.watermark svg {
    width: 32px;
    height: 32px;
}
```
